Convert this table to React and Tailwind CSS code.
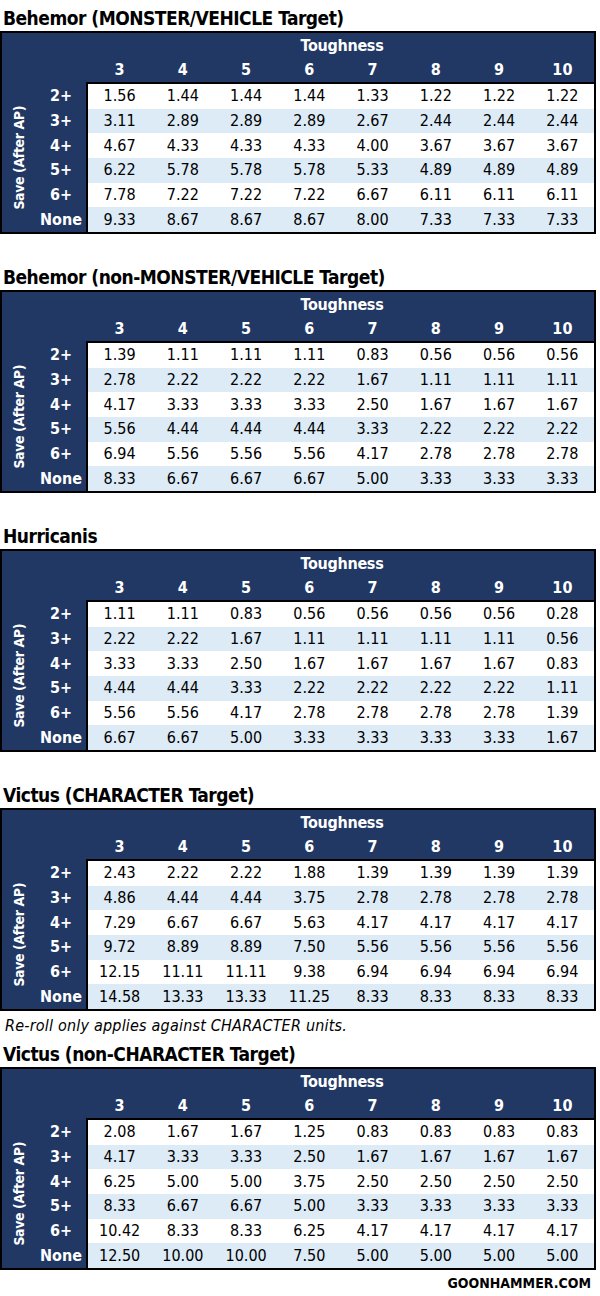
import React from "react";

const COND = { fontFamily: '"DejaVu Sans Condensed", "DejaVu Sans", sans-serif', fontStretch: "condensed" };

const TABLES = [
  {
    title: "Behemor (MONSTER/VEHICLE Target)",
    rows: [
      ["2+", "1.56 1.44 1.44 1.44 1.33 1.22 1.22 1.22"],
      ["3+", "3.11 2.89 2.89 2.89 2.67 2.44 2.44 2.44"],
      ["4+", "4.67 4.33 4.33 4.33 4.00 3.67 3.67 3.67"],
      ["5+", "6.22 5.78 5.78 5.78 5.33 4.89 4.89 4.89"],
      ["6+", "7.78 7.22 7.22 7.22 6.67 6.11 6.11 6.11"],
      ["None", "9.33 8.67 8.67 8.67 8.00 7.33 7.33 7.33"],
    ],
  },
  {
    title: "Behemor (non-MONSTER/VEHICLE Target)",
    rows: [
      ["2+", "1.39 1.11 1.11 1.11 0.83 0.56 0.56 0.56"],
      ["3+", "2.78 2.22 2.22 2.22 1.67 1.11 1.11 1.11"],
      ["4+", "4.17 3.33 3.33 3.33 2.50 1.67 1.67 1.67"],
      ["5+", "5.56 4.44 4.44 4.44 3.33 2.22 2.22 2.22"],
      ["6+", "6.94 5.56 5.56 5.56 4.17 2.78 2.78 2.78"],
      ["None", "8.33 6.67 6.67 6.67 5.00 3.33 3.33 3.33"],
    ],
  },
  {
    title: "Hurricanis",
    rows: [
      ["2+", "1.11 1.11 0.83 0.56 0.56 0.56 0.56 0.28"],
      ["3+", "2.22 2.22 1.67 1.11 1.11 1.11 1.11 0.56"],
      ["4+", "3.33 3.33 2.50 1.67 1.67 1.67 1.67 0.83"],
      ["5+", "4.44 4.44 3.33 2.22 2.22 2.22 2.22 1.11"],
      ["6+", "5.56 5.56 4.17 2.78 2.78 2.78 2.78 1.39"],
      ["None", "6.67 6.67 5.00 3.33 3.33 3.33 3.33 1.67"],
    ],
  },
  {
    title: "Victus (CHARACTER Target)",
    rows: [
      ["2+", "2.43 2.22 2.22 1.88 1.39 1.39 1.39 1.39"],
      ["3+", "4.86 4.44 4.44 3.75 2.78 2.78 2.78 2.78"],
      ["4+", "7.29 6.67 6.67 5.63 4.17 4.17 4.17 4.17"],
      ["5+", "9.72 8.89 8.89 7.50 5.56 5.56 5.56 5.56"],
      ["6+", "12.15 11.11 11.11 9.38 6.94 6.94 6.94 6.94"],
      ["None", "14.58 13.33 13.33 11.25 8.33 8.33 8.33 8.33"],
    ],
    note: "Re-roll only applies against CHARACTER units.",
  },
  {
    title: "Victus (non-CHARACTER Target)",
    rows: [
      ["2+", "2.08 1.67 1.67 1.25 0.83 0.83 0.83 0.83"],
      ["3+", "4.17 3.33 3.33 2.50 1.67 1.67 1.67 1.67"],
      ["4+", "6.25 5.00 5.00 3.75 2.50 2.50 2.50 2.50"],
      ["5+", "8.33 6.67 6.67 5.00 3.33 3.33 3.33 3.33"],
      ["6+", "10.42 8.33 8.33 6.25 4.17 4.17 4.17 4.17"],
      ["None", "12.50 10.00 10.00 7.50 5.00 5.00 5.00 5.00"],
    ],
  },
];

const COLS = ["3", "4", "5", "6", "7", "8", "9", "10"];

function Table({ rows }) {
  return (
    <div className="w-[596px] h-[203px] border-2 border-black bg-[#213864] flex text-white" style={COND}>
      <div className="w-[34px] flex flex-col">
        <div className="h-[51px]" />
        <div className="flex-1 flex items-center justify-center">
          <span className="[writing-mode:vertical-rl] rotate-180 font-bold text-[14px] tracking-[-0.4px] leading-none whitespace-nowrap">
            Save (After AP)
          </span>
        </div>
      </div>
      <div className="w-[50px] flex flex-col">
        <div className="h-[51px]" />
        <div className="flex-1 grid grid-rows-6">
          {rows.map(([l]) => (
            <div key={l} className="flex items-center justify-center font-bold text-[16px] leading-none">
              {l}
            </div>
          ))}
        </div>
      </div>
      <div className="flex-1 flex flex-col">
        <div className="h-[24px] flex items-center justify-center font-bold text-[16px] tracking-[-0.3px] leading-none pt-[1px] pl-[4px]">
          Toughness
        </div>
        <div className="h-[25px] grid grid-cols-8 pl-[2px]">
          {COLS.map((c) => (
            <div key={c} className="flex items-center justify-center font-bold text-[16px] leading-none">
              {c}
            </div>
          ))}
        </div>
        <div className="flex-1 border-l-2 border-t-2 border-black bg-white grid grid-rows-6">
          {rows.map(([l, vals], i) => (
            <div
              key={l}
              className={`grid grid-cols-8 text-[16px] leading-none text-black ${i % 2 ? "bg-[#ddebf7]" : "bg-white"}`}
            >
              {vals.split(" ").map((v, j) => (
                <div key={j} className="flex items-center justify-center">
                  {v}
                </div>
              ))}
            </div>
          ))}
        </div>
      </div>
    </div>
  );
}

export default function App() {
  return (
    <div className="w-[600px] h-[1296px] bg-white flex flex-col pt-[5px]" style={COND}>
      {TABLES.map((t, i) => (
        <div key={i} className="flex flex-col">
          <div className="h-[26px] flex items-center pl-[3px] font-bold text-[19px] tracking-[-0.5px] leading-none text-black">
            {t.title}
          </div>
          <Table rows={t.rows} />
          {t.note ? (
            <div className="h-[30px] flex items-center pl-[5px] italic text-[16px] tracking-[0.2px] leading-none text-black">
              {t.note}
            </div>
          ) : (
            i < TABLES.length - 1 && <div className="h-[30px]" />
          )}
        </div>
      ))}
      <div className="h-[26px] flex items-center justify-end pr-[9px] font-bold text-[14px] leading-none text-black">
        GOONHAMMER.COM
      </div>
    </div>
  );
}
